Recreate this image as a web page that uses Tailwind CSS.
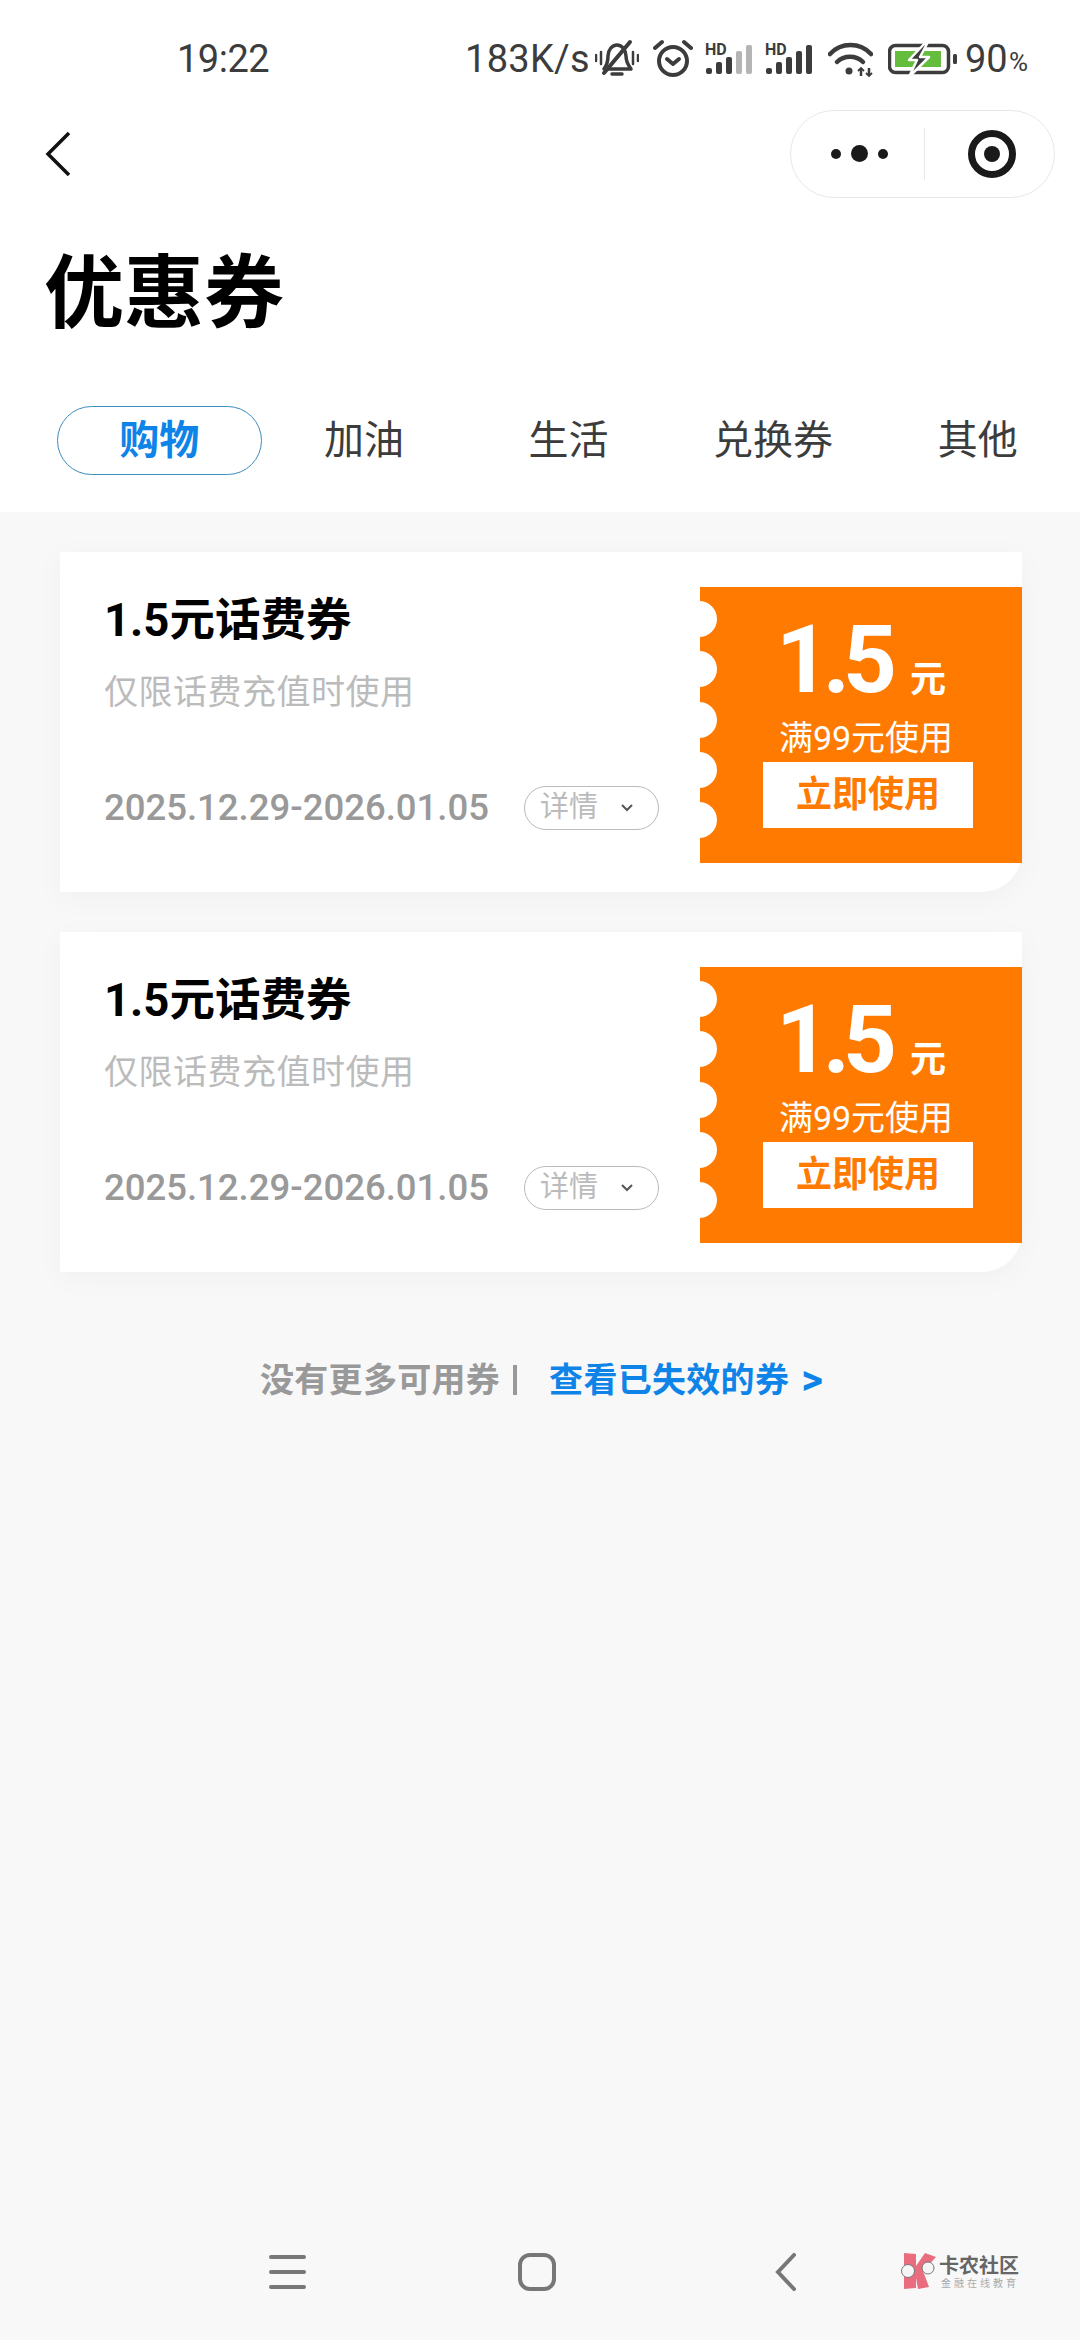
<!DOCTYPE html>
<html lang="zh-CN">
<head>
  <meta charset="UTF-8" />
  <meta name="viewport" content="width=device-width, initial-scale=1" />
  <title>优惠券</title>
  <script src="https://cdn.jsdelivr.net/npm/@tailwindcss/browser@4"></script>
</head>
<body>
  <div class="w-[1080px] h-[2340px] flex flex-col overflow-hidden bg-[#f8f8f8] font-['Roboto','Noto_Sans_CJK_SC',sans-serif]">
    <header class="bg-white">
      <!-- status bar -->
      <div class="h-[110px] pt-[39px] flex items-start pl-[177px] text-[#3c3c3c]">
        <span class="w-[288px] text-[38px] leading-[40px] tracking-[-0.5px]">19:22</span>
        <div class="h-[40px] flex items-center">
          <span class="w-[130px] text-[38px] leading-[40px] tracking-[0.3px]">183K/s</span>
          <svg width="44" height="40" viewBox="0 0 44 40" fill="none" stroke="#3c3c3c" stroke-width="3.5" stroke-linecap="round" stroke-linejoin="round">
            <path d="M9 30c3-4 4-8 4-13 0-6 4-11 9-11s9 5 9 11c0 5 2 9 5 13z" />
            <path d="M35 3 9 34" stroke-width="4" />
            <path d="M1 16v6M6 13v12M38 13v12M43 16v6" stroke-width="2.5" />
            <path d="M17 35h10" stroke-width="3.5" />
          </svg>
          <svg class="ml-[14px]" width="40" height="40" viewBox="0 0 40 40" fill="none" stroke="#3c3c3c" stroke-width="4" stroke-linecap="round" stroke-linejoin="round">
            <circle cx="20" cy="22" r="14" />
            <path d="M14 20l6 5 6-5" />
            <path d="M2 9l7-6M38 9l-7-6" />
          </svg>
          <svg class="ml-[12px]" width="48" height="40" viewBox="0 0 48 40">
            <text x="0" y="16" font-family="Roboto" font-size="16" font-weight="700" fill="#3c3c3c">HD</text>
            <rect x="1" y="29" width="6" height="6" rx="2" fill="#3c3c3c" />
            <rect x="11" y="23" width="6" height="12" rx="2" fill="#3c3c3c" />
            <rect x="21" y="18" width="6" height="17" rx="2" fill="#3c3c3c" />
            <rect x="31" y="12" width="6" height="23" rx="2" fill="#b4b4b4" />
            <rect x="41" y="6" width="6" height="29" rx="2" fill="#b4b4b4" />
          </svg>
          <svg class="ml-[12px]" width="48" height="40" viewBox="0 0 48 40">
            <text x="0" y="16" font-family="Roboto" font-size="16" font-weight="700" fill="#3c3c3c">HD</text>
            <rect x="1" y="29" width="6" height="6" rx="2" fill="#3c3c3c" />
            <rect x="11" y="23" width="6" height="12" rx="2" fill="#3c3c3c" />
            <rect x="21" y="18" width="6" height="17" rx="2" fill="#3c3c3c" />
            <rect x="31" y="12" width="6" height="23" rx="2" fill="#3c3c3c" />
            <rect x="41" y="6" width="6" height="29" rx="2" fill="#3c3c3c" />
          </svg>
          <svg class="ml-[15px]" width="45" height="40" viewBox="0 0 45 40" fill="none" stroke="#3c3c3c" stroke-width="4.5" stroke-linecap="round">
            <path d="M2 15C13 3 32 3 43 15" />
            <path d="M9 23c7-7 19-7 26 0" />
            <circle cx="21" cy="32" r="3.5" fill="#3c3c3c" stroke="none" />
            <path d="M33 37v-7M41 29v7" stroke-width="2.5" stroke-linecap="butt" />
            <path d="M30 32l3-3 3 3M38 34l3 3 3-3" stroke-width="1.8" stroke-linecap="butt" />
          </svg>
          <svg class="ml-[15px]" width="70" height="40" viewBox="0 0 70 40" fill="none">
            <rect x="1.5" y="6.5" width="59" height="27" rx="6" stroke="#3c3c3c" stroke-width="3.5" />
            <rect x="7" y="12" width="46" height="16" fill="#64bd3c" />
            <rect x="65" y="15" width="4" height="10" rx="1.5" fill="#3c3c3c" />
            <path d="M38 3 21 21h8l-8 17 20-20h-9l8-15z" fill="#3c3c3c" stroke="#fff" stroke-width="2.5" stroke-linejoin="round" />
          </svg>
          <span class="ml-[7px] w-[44px] text-[38px] leading-[40px]">90</span><span class="text-[26px] leading-[40px] pt-[6px]">%</span>
        </div>
      </div>

      <!-- nav row -->
      <div class="h-[87px] pl-[45px] pr-[25px] flex items-center justify-between">
        <svg width="26" height="46" viewBox="0 0 26 46" fill="none" stroke="#111" stroke-width="3.5">
          <path d="M24 2 3 23l21 21" />
        </svg>
        <div class="w-[265px] h-[88px] rounded-full border border-[#e8e8e8] flex items-center">
          <div class="w-[133px] flex items-center justify-center gap-[10px] pl-[3px]">
            <span class="w-[10px] h-[10px] rounded-full bg-[#1a1a1a]"></span>
            <span class="w-[17px] h-[17px] rounded-full bg-[#1a1a1a]"></span>
            <span class="w-[10px] h-[10px] rounded-full bg-[#1a1a1a]"></span>
          </div>
          <div class="w-px h-[52px] bg-[#e8e8e8]"></div>
          <div class="flex-1 flex justify-center pl-[4px]">
            <div class="w-[48px] h-[48px] rounded-full border-[7px] border-[#1a1a1a] flex items-center justify-center">
              <span class="w-[16px] h-[16px] rounded-full bg-[#1a1a1a]"></span>
            </div>
          </div>
        </div>
      </div>

      <h1 class="mt-[57px] pl-[44px] text-[80px] leading-[80px] font-bold text-black">优惠券</h1>

      <!-- tabs -->
      <div class="mt-[72px] pb-[37px] pl-[57px] grid grid-cols-5 text-[40px] text-[#3c3c3c]">
        <div class="h-[69px] rounded-full border border-[#3b8cc0] flex items-center justify-center font-bold text-[#0e84e8]">购物</div>
        <div class="h-[69px] flex items-center justify-center">加油</div>
        <div class="h-[69px] flex items-center justify-center">生活</div>
        <div class="h-[69px] flex items-center justify-center">兑换券</div>
        <div class="h-[69px] flex items-center justify-center">其他</div>
      </div>
    </header>

    <main class="pt-[40px] pl-[60px] pr-[58px] flex flex-col gap-[40px]">
      <!-- coupon card -->
      <div class="h-[340px] flex bg-white rounded-br-[40px] shadow-[0_6px_30px_rgba(0,0,0,0.035)]">
        <div class="w-[640px] pl-[44px] pr-[41px] pt-[44px]">
          <div class="text-[45.5px] leading-[50px] font-bold text-black">1.5元话费券</div>
          <div class="mt-[24px] text-[34px] tracking-[0.5px] leading-[44px] text-[#bbbbbb]">仅限话费充值时使用</div>
          <div class="mt-[72px] flex items-center justify-between">
            <span class="text-[36.5px] leading-[44px] font-medium text-[#999999]">2025.12.29-2026.01.05</span>
            <span class="w-[135px] h-[44px] rounded-full border border-[#bbbbbb] pl-[15px] flex items-center text-[29px] text-[#bbbbbb]">
              详情
              <svg class="ml-[22px]" width="14" height="10" viewBox="0 0 14 10" fill="none" stroke="#555" stroke-width="2"><path d="M2 2l5 5 5-5" /></svg>
            </span>
          </div>
        </div>
        <div class="relative flex-1 mt-[35px] mb-[29px] bg-[#ff7a00] flex flex-col items-center text-white">
          <div class="absolute -left-[19px] top-[14px] flex flex-col gap-[14.3px]">
            <span class="w-[36px] h-[36px] rounded-full bg-white"></span>
            <span class="w-[36px] h-[36px] rounded-full bg-white"></span>
            <span class="w-[36px] h-[36px] rounded-full bg-white"></span>
            <span class="w-[36px] h-[36px] rounded-full bg-white"></span>
            <span class="w-[36px] h-[36px] rounded-full bg-white"></span>
          </div>
          <div class="mt-[28px] h-[90px] flex items-baseline">
            <span class="text-[94px] leading-[90px] font-bold tracking-[-7px]">1.5</span>
            <span class="ml-[20px] text-[36px] leading-[40px] font-bold">元</span>
          </div>
          <div class="mt-[13px] pl-[10px] text-[34px] leading-[40px]">满99元使用</div>
          <div class="mt-[4px] ml-[14px] w-[210px] h-[66px] bg-white flex items-center justify-center text-[36px] font-bold text-[#ff7a00]">立即使用</div>
        </div>
      </div>

      <div class="h-[340px] flex bg-white rounded-br-[40px] shadow-[0_6px_30px_rgba(0,0,0,0.035)]">
        <div class="w-[640px] pl-[44px] pr-[41px] pt-[44px]">
          <div class="text-[45.5px] leading-[50px] font-bold text-black">1.5元话费券</div>
          <div class="mt-[24px] text-[34px] tracking-[0.5px] leading-[44px] text-[#bbbbbb]">仅限话费充值时使用</div>
          <div class="mt-[72px] flex items-center justify-between">
            <span class="text-[36.5px] leading-[44px] font-medium text-[#999999]">2025.12.29-2026.01.05</span>
            <span class="w-[135px] h-[44px] rounded-full border border-[#bbbbbb] pl-[15px] flex items-center text-[29px] text-[#bbbbbb]">
              详情
              <svg class="ml-[22px]" width="14" height="10" viewBox="0 0 14 10" fill="none" stroke="#555" stroke-width="2"><path d="M2 2l5 5 5-5" /></svg>
            </span>
          </div>
        </div>
        <div class="relative flex-1 mt-[35px] mb-[29px] bg-[#ff7a00] flex flex-col items-center text-white">
          <div class="absolute -left-[19px] top-[14px] flex flex-col gap-[14.3px]">
            <span class="w-[36px] h-[36px] rounded-full bg-white"></span>
            <span class="w-[36px] h-[36px] rounded-full bg-white"></span>
            <span class="w-[36px] h-[36px] rounded-full bg-white"></span>
            <span class="w-[36px] h-[36px] rounded-full bg-white"></span>
            <span class="w-[36px] h-[36px] rounded-full bg-white"></span>
          </div>
          <div class="mt-[28px] h-[90px] flex items-baseline">
            <span class="text-[94px] leading-[90px] font-bold tracking-[-7px]">1.5</span>
            <span class="ml-[20px] text-[36px] leading-[40px] font-bold">元</span>
          </div>
          <div class="mt-[13px] pl-[10px] text-[34px] leading-[40px]">满99元使用</div>
          <div class="mt-[4px] ml-[14px] w-[210px] h-[66px] bg-white flex items-center justify-center text-[36px] font-bold text-[#ff7a00]">立即使用</div>
        </div>
      </div>

      <div class="mt-[43px] pl-[200px] flex items-center text-[34px] tracking-[0.3px] leading-[50px] font-bold">
        <span class="text-[#999999]">没有更多可用券</span>
        <span class="ml-[13px] w-[4px] h-[30px] bg-[#999999]"></span>
        <span class="ml-[32px] text-[#0e84e8]">查看已失效的券</span>
        <span class="ml-[12px] text-[42px] text-[#0e84e8]">&gt;</span>
      </div>
    </main>

    <!-- system nav -->
    <nav class="mt-auto h-[120px] pt-[33px] pl-[269px] flex items-start">
      <svg width="37" height="38" viewBox="0 0 37 38" fill="none" stroke="#777" stroke-width="4" stroke-linecap="round">
        <path d="M2 4h33M2 19h33M2 34h33" />
      </svg>
      <svg class="ml-[212px]" width="38" height="38" viewBox="0 0 38 38" fill="none" stroke="#777" stroke-width="4">
        <rect x="2" y="2" width="34" height="34" rx="10" />
      </svg>
      <svg class="ml-[219px]" width="22" height="38" viewBox="0 0 22 38" fill="none" stroke="#777" stroke-width="4" stroke-linecap="round">
        <path d="M19 2 3 19l16 17" />
      </svg>
      <div class="ml-[104px] flex items-start">
        <svg width="35" height="36" viewBox="0 0 35 36">
          <path d="M3 0l12 1v34l-12 1z" fill="#e96d7f" />
          <path d="M15 13 24 0l11 4-13 14 6 16-11 2-2-11z" fill="#e96d7f" />
          <circle cx="7" cy="18" r="6.5" fill="#f5f5f5" stroke="#777" stroke-width="1" />
          <circle cx="27" cy="15" r="6" fill="#f5f5f5" stroke="#777" stroke-width="1" />
        </svg>
        <div class="ml-[3px] pt-[2px] flex flex-col">
          <span class="text-[20px] leading-[22px] font-bold text-[#666]">卡农社区</span>
          <span class="pl-[2px] text-[10px] leading-[14px] tracking-[3px] text-[#aaaaaa]">金融在线教育</span>
        </div>
      </div>
    </nav>
  </div>
</body>
</html>
